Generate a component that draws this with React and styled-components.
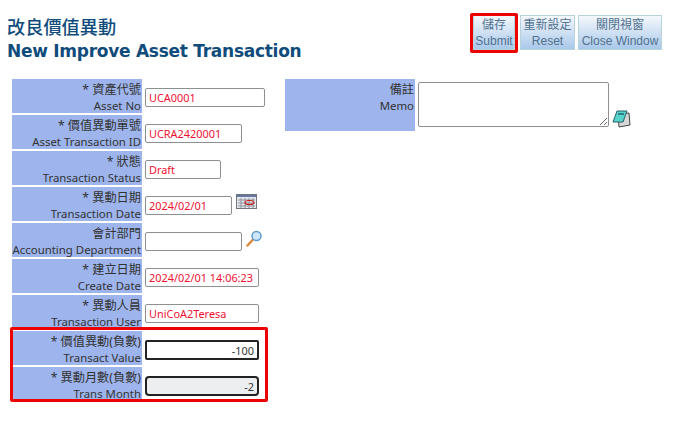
import React from 'react'
import styled, { createGlobalStyle } from 'styled-components'

const Global = createGlobalStyle`
body {
  margin: 0;
  background: #fff;
  font-family: "Noto Sans", "Noto Sans CJK TC", sans-serif;
}
`
const Page = styled.div`
width: 684px;
height: 429px;
padding: 15px 22px 0 7px;
box-sizing: border-box;
position: relative;
overflow: hidden;
`
const Header = styled.div`
display: flex;
justify-content: space-between;
align-items: flex-start;
height: 64px;
`
const Title = styled.h1`
margin: -1px 0 0;
color: #0f4c7c;
font-family: "DejaVu Sans", sans-serif;
font-size: 17px;
line-height: 24px;
font-weight: bold;
letter-spacing: -0.27px;
`
const TitleZh = styled.div`
height: 25px;
font-family: "Noto Sans CJK TC", sans-serif;
font-weight: 500;
font-size: 18.2px;
letter-spacing: 0;
`
const Buttons = styled.div`
display: flex;
gap: 3px;
`
const ActionButton = styled.button`
padding: 0;
width: ${p => p.$w}px;
height: 35px;
border: 1px solid #b5d3d8;
background: linear-gradient(#f4f8fc, #a9c8ea);
color: #51718f;
font-family: "Liberation Sans", "Noto Sans CJK TC", sans-serif;
font-size: 12px;
line-height: 16px;
`
const SubmitButton = styled(ActionButton)`
margin-right: 2px;
`
const Columns = styled.div`
display: flex;
padding-left: 5px;
`
const LeftColumn = styled.div`
width: 273px;
display: flex;
flex-direction: column;
gap: 2px;
`
const Row = styled.div`
display: flex;
align-items: flex-start;
height: 34px;
`
const Label = styled.div`
flex: none;
width: 130px;
height: ${p => p.$h || 34}px;
box-sizing: border-box;
padding: 3px 1px 0 0;
background: #9db4ec;
color: #333;
text-align: right;
font-size: 11.4px;
line-height: 16px;
white-space: nowrap;
`
const Zh = styled.div`
font-family: "Noto Sans", "Noto Sans CJK TC", sans-serif;
font-size: 12.2px;
`
const Field = styled.input`
box-sizing: border-box;
margin: 9px 0 0 3px;
width: ${p => p.$w}px;
height: ${p => p.$strong ? 20 : 19}px;
padding: 0 3px;
border: ${p => p.$strong ? '2px solid #222' : '1px solid #8f8f8f'};
border-radius: ${p => p.$round ? 4 : 2}px;
outline: none;
background: ${p => p.$bg || '#fff'};
color: ${p => p.$strong ? '#333' : '#f01030'};
text-align: ${p => p.$strong ? 'right' : 'left'};
font-family: "Noto Sans", sans-serif;
font-size: 10.9px;
`
const IconSlot = styled.span`
display: inline-flex;
margin: ${p => p.$m};
`
const MemoBlock = styled.div`
display: flex;
align-items: flex-start;
`
const Memo = styled.textarea`
box-sizing: border-box;
width: 191px;
height: 45px;
margin: 3px 0 0 3px;
border: 1px solid #8f8f8f;
border-radius: 2px;
outline: none;
`
// red annotation frames that lie over the screenshot
const Mark = styled.div`
position: absolute;
left: ${p => p.$x}px;
top: ${p => p.$y}px;
width: ${p => p.$w}px;
height: ${p => p.$h}px;
box-sizing: border-box;
border: 3px solid #ee0000;
border-radius: 2px;
pointer-events: none;
`

const CalendarIcon = () => (
  <svg width="21" height="15" viewBox="0 0 21 15">
    <rect x="0.5" y="0.5" width="20" height="14" fill="#e4e6ea" stroke="#70757f" />
    <rect x="1" y="1" width="19" height="2" fill="#66779f" />
    <path d="M2 6h17M2 9h17M2 12h17M5 4v10M9 4v10M13 4v10M17 4v10" stroke="#8f939c" strokeWidth="1" />
    <ellipse cx="13.5" cy="8.5" rx="4.5" ry="2" fill="none" stroke="#c81818" strokeWidth="1.1" />
  </svg>
)

const SearchIcon = () => (
  <svg width="17" height="17" viewBox="0 0 17 17">
    <path d="M1.5 15.5 L7 9.5" stroke="#d88a3c" strokeWidth="2.4" strokeLinecap="round" />
    <circle cx="10.5" cy="6" r="4.5" fill="#cfe6f8" stroke="#5e9ccf" strokeWidth="1.5" />
  </svg>
)

const NoteIcon = () => (
  <svg width="19" height="18" viewBox="0 0 19 18">
    <path d="M6 4 L17 3 L18 15 L7 17 Z" fill="#d8d8d8" stroke="#444" strokeWidth="1" />
    <path d="M5 1 L15 1 L11 12 L1 12 Z" fill="#58d4cf" stroke="#2b5f62" strokeWidth="1" />
    <path d="M6 4 L12 4" stroke="#1f5f66" strokeWidth="1.4" />
  </svg>
)

const rows = [
  { zh: '* 資產代號', en: 'Asset No', value: 'UCA0001', w: 120 },
  { zh: '* 價值異動單號', en: 'Asset Transaction ID', value: 'UCRA2420001', w: 97 },
  { zh: '* 狀態', en: 'Transaction Status', value: 'Draft', w: 76 },
  { zh: '* 異動日期', en: 'Transaction Date', value: '2024/02/01', w: 87, icon: 'calendar' },
  { zh: '會計部門', en: 'Accounting Department', value: '', w: 97, icon: 'search' },
  { zh: '* 建立日期', en: 'Create Date', value: '2024/02/01 14:06:23', w: 114 },
  { zh: '* 異動人員', en: 'Transaction User', value: 'UniCoA2Teresa', w: 114 },
  { zh: '* 價值異動(負數)', en: 'Transact Value', value: '-100', w: 114, strong: true },
  { zh: '* 異動月數(負數)', en: 'Trans Month', value: '-2', w: 114, strong: true, round: true, bg: '#eceef0' },
]

const App = () => (
  <Page>
    <Global />
    <Header>
      <Title>
        <TitleZh>改良價值異動</TitleZh>
        New Improve Asset Transaction
      </Title>
      <Buttons>
        <SubmitButton $w={42}>儲存<br />Submit</SubmitButton>
        <ActionButton $w={55}>重新設定<br />Reset</ActionButton>
        <ActionButton $w={84}>關閉視窗<br />Close Window</ActionButton>
      </Buttons>
    </Header>
    <Columns>
      <LeftColumn>
        {rows.map(r => (
          <Row key={r.en}>
            <Label>
              <Zh>{r.zh}</Zh>
              {r.en}
            </Label>
            <Field readOnly value={r.value} $w={r.w} $strong={r.strong} $round={r.round} $bg={r.bg} />
            {r.icon === 'calendar' && <IconSlot $m="7px 0 0 4px"><CalendarIcon /></IconSlot>}
            {r.icon === 'search' && <IconSlot $m="7px 0 0 4px"><SearchIcon /></IconSlot>}
          </Row>
        ))}
      </LeftColumn>
      <MemoBlock>
        <Label $h={52}>
          <Zh>備註</Zh>
          Memo
        </Label>
        <Memo readOnly />
        <IconSlot $m="31px 0 0 3px"><NoteIcon /></IconSlot>
      </MemoBlock>
    </Columns>
    <Mark $x={470} $y={13} $w={48} $h={40} />
    <Mark $x={10} $y={327} $w={258} $h={75} />
  </Page>
)

export default App
